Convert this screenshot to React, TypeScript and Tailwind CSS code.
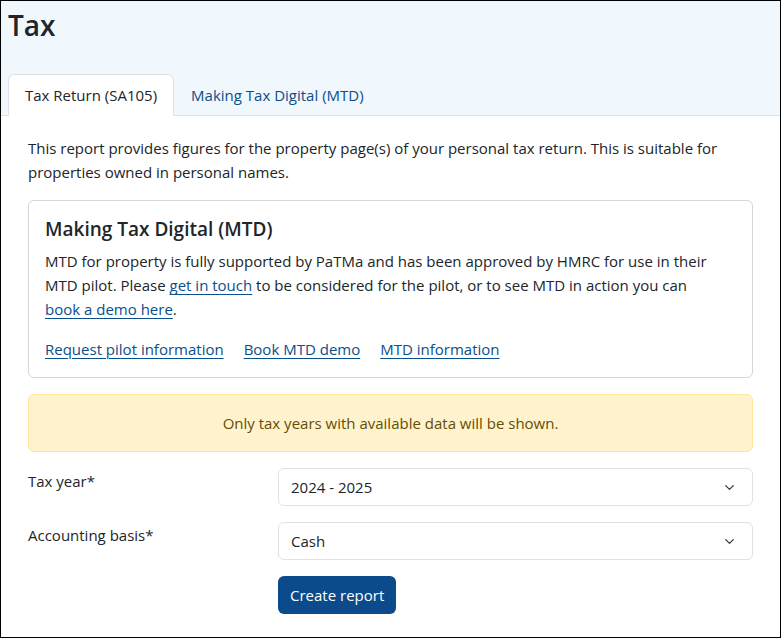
import { ChevronDown } from "lucide-react";

const linkCls = "text-[#0b4f8a] underline underline-offset-[3px] decoration-1";

function SelectBox({ value }: { value: string }) {
  return (
    <div className="flex h-[38px] items-center justify-between rounded-md border border-[#dee2e6] bg-white pl-3 pr-[15px]">
      <span>{value}</span>
      <ChevronDown className="h-[15px] w-[15px] text-[#343a40]" strokeWidth={2} />
    </div>
  );
}

export default function App() {
  return (
    <div className="h-[638px] w-[781px] overflow-hidden border border-black bg-white text-[15px] leading-6 text-[#212529] font-['Open_Sans',sans-serif]">
      <div className="border-b border-[#dee2e6] bg-[#f0f7fd] px-[7px]">
        <h1 className="pt-[5px] pb-[30px] text-[28px] leading-[38px] font-semibold">Tax</h1>
        <div className="-mb-px flex">
          <div className="rounded-t-md border border-[#dee2e6] border-b-white bg-white px-4 py-2">
            Tax Return (SA105)
          </div>
          <div className="border border-transparent px-4 py-2 text-[#0b4f8a]">
            Making Tax Digital (MTD)
          </div>
        </div>
      </div>

      <div className="px-[27px] pt-5">
        <p>
          This report provides figures for the property page(s) of your personal tax return. This is suitable for
          properties owned in personal names.
        </p>

        <div className="mt-4 rounded-md border border-[#d6d6d6] p-4">
          <h5 className="mb-2 text-[19px] leading-6 font-semibold">Making Tax Digital (MTD)</h5>
          <p>
            MTD for property is fully supported by PaTMa and has been approved by HMRC for use in their MTD
            pilot. Please <a className={linkCls}>get in touch</a> to be considered for the pilot, or to see MTD in
            action you can
            <br />
            <a className={linkCls}>book a demo here</a>.
          </p>
          <div className="mt-4 flex gap-5">
            <a className={linkCls}>Request pilot information</a>
            <a className={linkCls}>Book MTD demo</a>
            <a className={linkCls}>MTD information</a>
          </div>
        </div>

        <div className="mt-4 rounded-md border border-[#ffe69c] bg-[#fff3cd] p-4 text-center text-[#664d03]">
          Only tax years with available data will be shown.
        </div>

        <div className="mt-4 grid grid-cols-[250px_1fr] gap-y-4">
          <label className="pt-px">Tax year*</label>
          <SelectBox value="2024 - 2025" />
          <label className="pt-px">Accounting basis*</label>
          <SelectBox value="Cash" />
          <div />
          <div>
            <button className="h-[38px] rounded-md bg-[#0b4a8b] px-3 text-white">Create report</button>
          </div>
        </div>
      </div>
    </div>
  );
}
